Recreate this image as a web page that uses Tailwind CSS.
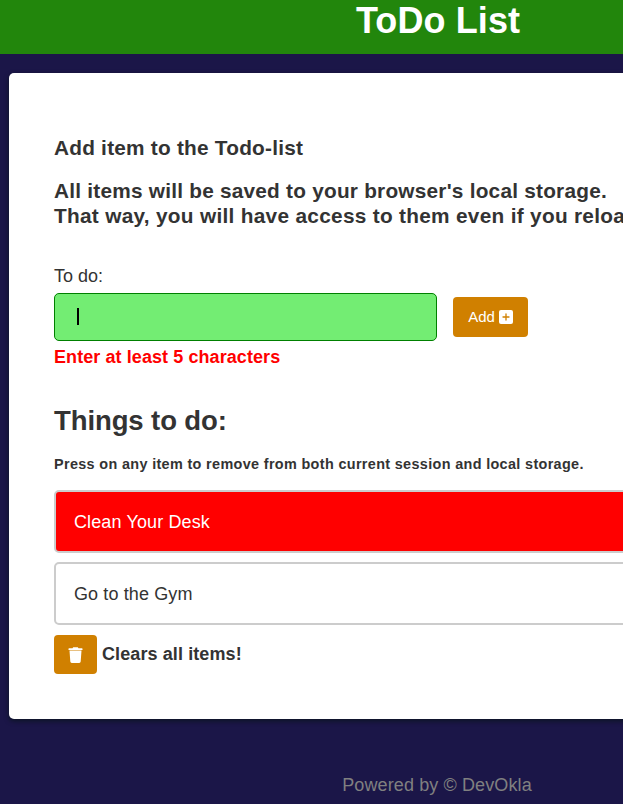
<!DOCTYPE html>
<html lang="en">
<head>
<meta charset="utf-8">
<title>ToDo List</title>
<script src="https://cdn.jsdelivr.net/npm/@tailwindcss/browser@4"></script>
</head>
<body class="h-[804px] w-[623px] overflow-hidden bg-[#1b1648] font-['Liberation_Sans',Arial,sans-serif] text-lg text-[#333]">
<div class="flex h-[804px] w-[876px] flex-col">
  <header class="h-[54px] bg-[#22860c] text-center">
    <h1 class="text-[36px] leading-[41px] font-bold tracking-[0.1px] text-white">ToDo List</h1>
  </header>
  <main class="mx-[9px] mt-[19px] h-[646px] rounded-[5px] bg-white px-[45px] pt-[62px] shadow-[0_2px_5px_rgba(0,20,10,0.6)]">
    <h2 class="text-[20.8px] leading-[25px] font-bold tracking-[0.23px]">Add item to the Todo-list</h2>
    <p class="mt-[18px] text-[20.8px] leading-[25px] font-bold tracking-[0.23px] whitespace-nowrap">All items will be saved to your browser's local storage.<br><span class="tracking-[0.3px]">That way, you will have access to them even if you reload.</span></p>
    <form class="mt-[37px]">
      <label for="todo" class="block leading-[22px]">To do:</label>
      <div class="mt-[6px] flex items-center gap-4">
        <div id="todo" class="flex h-12 w-[383px] items-center rounded-[5px] border border-[#008000] bg-[#73ed73] pb-px pl-[22px]"><span class="h-[17px] w-[2px] bg-black"></span></div>
        <button type="button" class="flex h-10 w-[75px] items-center rounded-[4px] bg-[#d08000] pl-[15px] text-[15px] text-white"><span class="w-[27px]">Add</span>
          <svg class="mb-px ml-[4px] h-[14px] w-[14px] shrink-0" viewBox="0 0 14 14"><rect width="14" height="14" rx="2" fill="#fff"/><path d="M7 4v6M4 7h6" stroke="#d08000" stroke-width="1.3" stroke-linecap="round"/></svg>
        </button>
      </div>
      <p class="mt-[5px] leading-[22px] font-bold tracking-[0.08px] text-[#f00]">Enter at least 5 characters</p>
    </form>
    <h2 class="mt-[36px] text-[27.5px] leading-[34px] font-bold tracking-[-0.1px]">Things to do:</h2>
    <p class="mt-[17px] text-[14.4px] leading-[18px] font-bold tracking-[0.35px]">Press on any item to remove from both current session and local storage.</p>
    <ul class="mt-[17px] flex flex-col gap-[9px]">
      <li class="flex h-[63px] items-center rounded-[5px] border-2 border-[#ccc] bg-[#f00] px-[18px] tracking-[0.12px] text-white">Clean Your Desk</li>
      <li class="flex h-[63px] items-center rounded-[5px] border-2 border-[#ccc] px-[18px] tracking-[0.12px]">Go to the Gym</li>
    </ul>
    <div class="mt-[10px] flex items-center gap-[5px]">
      <button type="button" aria-label="Clear" class="flex h-[39px] w-[43px] items-center justify-center rounded-[4px] bg-[#d08000]">
        <svg class="h-[16px] w-[15px]" viewBox="0 0 15 16" fill="#fff"><path d="M.5 1.8Q.5 1.2 1.1 1.2H4.5L5.2.3H9.8L10.5 1.2H13.9Q14.5 1.2 14.5 1.8V3H.5ZM1.5 3.6H13.5L12.7 14.6Q12.6 16 11.2 16H3.8Q2.4 16 2.3 14.6Z"/></svg>
      </button>
      <strong class="mb-[2px] tracking-[0.1px]">Clears all items!</strong>
    </div>
  </main>
  <footer class="mt-[55px] pr-[2px] text-center leading-[22px] tracking-[0.12px] text-[#808080]">Powered by © DevOkla</footer>
</div>
</body>
</html>
